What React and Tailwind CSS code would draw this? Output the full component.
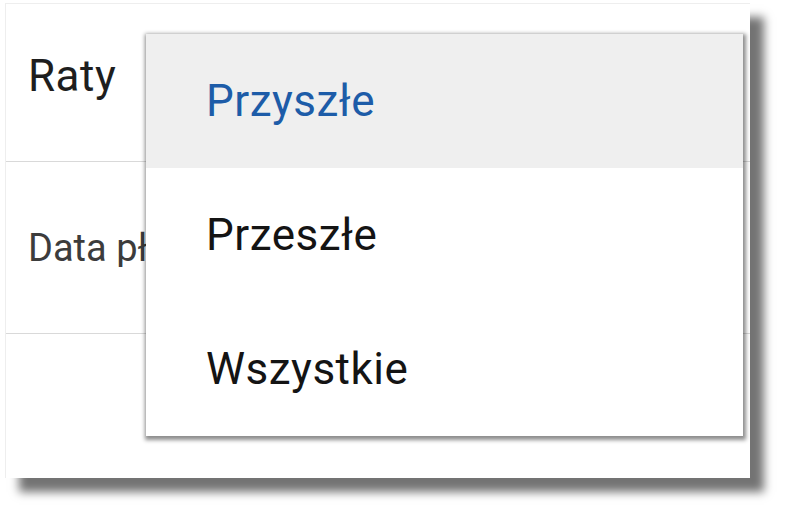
import React from 'react';

const options = [
  { label: 'Przyszłe', active: true },
  { label: 'Przeszłe', active: false },
  { label: 'Wszystkie', active: false },
];

const App = () => {
  return (
    <div className="w-[786px] h-[515px] bg-white overflow-hidden font-['Roboto',sans-serif]">
      <div className="relative ml-[5px] mt-[3px] w-[745px] h-[475px] bg-white border-l border-t border-[#eeeeee] shadow-[14px_14px_9px_rgba(0,0,0,0.55)] flex flex-col">
        {/* Header */}
        <div className="h-[158px] border-b border-[#d9d9d9] pl-[22px] pt-[50px]">
          <h1 className="text-[44px] leading-none text-[#1e1e1e] tracking-[0.5px]">Raty</h1>
        </div>

        {/* Column header row, cut off where the menu covers it */}
        <div className="h-[172px] border-b border-[#d9d9d9] pl-[22px] pt-[67px]">
          <div className="w-[118px] overflow-hidden">
            <span className="block text-[38px] leading-none text-[#3c3c3c] whitespace-nowrap">Data płatności</span>
          </div>
        </div>

        <div className="flex-1" />

        {/* Dropdown menu */}
        <div className="absolute left-[140px] top-[30px] w-[597px] bg-white shadow-[1px_2px_4px_2px_rgba(0,0,0,0.45)] flex flex-col">
          {options.map((opt) => (
            <div
              key={opt.label}
              className={`h-[134px] pl-[60px] flex items-center ${opt.active ? 'bg-[#efefef]' : 'bg-white'}`}
            >
              <span
                className={`text-[44px] leading-none tracking-[0.5px] ${opt.active ? 'text-[#1d5ca8]' : 'text-[#141414]'}`}
              >
                {opt.label}
              </span>
            </div>
          ))}
        </div>
      </div>
    </div>
  );
};

export default App;
